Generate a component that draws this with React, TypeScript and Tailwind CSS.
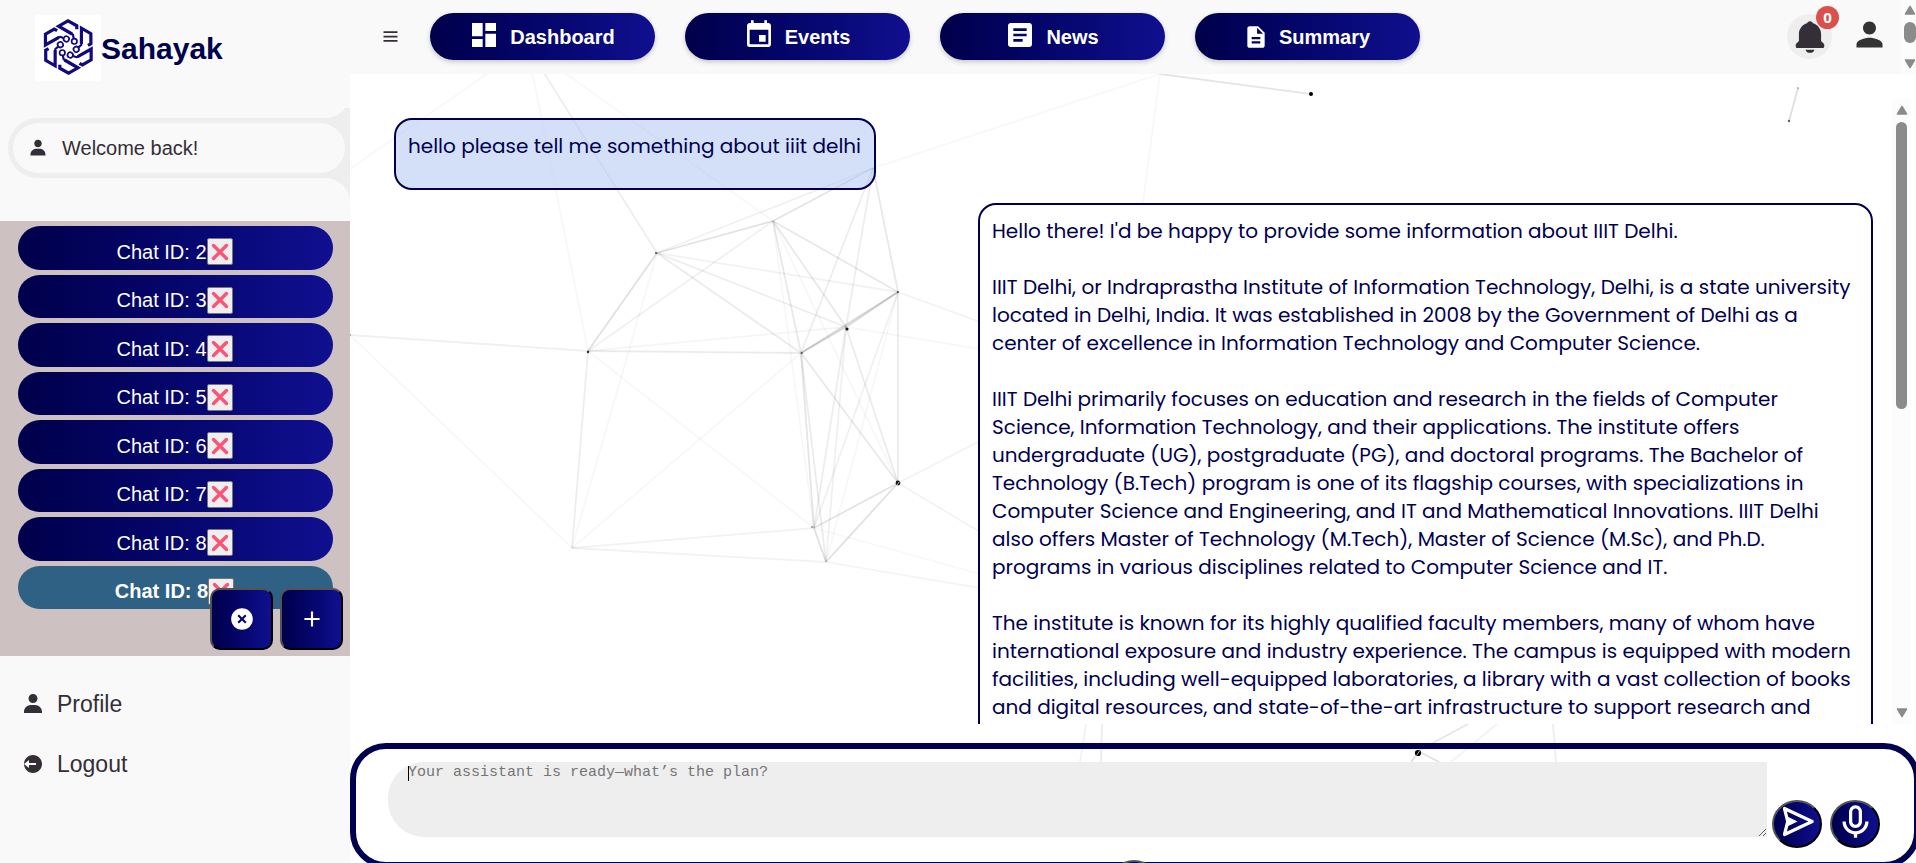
import type { ComponentType } from "react";
import {
  BiMenu,
  BiMicrophone,
  BiPlus,
  BiSend,
  BiSolidBell,
  BiSolidLogOutCircle,
  BiSolidUser,
  BiSolidXCircle,
} from "react-icons/bi";
import { MdArticle, MdDashboard, MdDescription, MdEvent, MdPerson } from "react-icons/md";

type Icon = ComponentType<{ className?: string }>;

const navItems: { label: string; icon: Icon; large: boolean }[] = [
  { label: "Dashboard", icon: MdDashboard, large: true },
  { label: "Events", icon: MdEvent, large: true },
  { label: "News", icon: MdArticle, large: true },
  { label: "Summary", icon: MdDescription, large: false },
];

const chats = [2, 3, 4, 5, 6, 7, 8, 8];

const reply = [
  "Hello there! I'd be happy to provide some information about IIIT Delhi.",
  "",
  "IIIT Delhi, or Indraprastha Institute of Information Technology, Delhi, is a state university",
  "located in Delhi, India. It was established in 2008 by the Government of Delhi as a",
  "center of excellence in Information Technology and Computer Science.",
  "",
  "IIIT Delhi primarily focuses on education and research in the fields of Computer",
  "Science, Information Technology, and their applications. The institute offers",
  "undergraduate (UG), postgraduate (PG), and doctoral programs. The Bachelor of",
  "Technology (B.Tech) program is one of its flagship courses, with specializations in",
  "Computer Science and Engineering, and IT and Mathematical Innovations. IIIT Delhi",
  "also offers Master of Technology (M.Tech), Master of Science (M.Sc), and Ph.D.",
  "programs in various disciplines related to Computer Science and IT.",
  "",
  "The institute is known for its highly qualified faculty members, many of whom have",
  "international exposure and industry experience. The campus is equipped with modern",
  "facilities, including well-equipped laboratories, a library with a vast collection of books",
  "and digital resources, and state-of-the-art infrastructure to support research and",
].join("\n");

// x1, y1, x2, y2, opacity
const links: number[][] = [
  [527, 46, 350, 169, 0.03],
  [527, 46, 588, 351, 0.03],
  [527, 46, 657, 253, 0.07],
  [527, 46, 773, 221, 0.03],
  [873, 168, 657, 253, 0.06],
  [873, 168, 773, 221, 0.11],
  [873, 168, 801, 353, 0.07],
  [873, 168, 846, 327, 0.07],
  [873, 168, 898, 292, 0.09],
  [873, 168, 1160, 74, 0.03],
  [1160, 74, 1311, 94, 0.1],
  [1160, 74, 1143, 202, 0.03],
  [773, 221, 657, 253, 0.11],
  [773, 221, 588, 351, 0.06],
  [773, 221, 801, 353, 0.09],
  [773, 221, 846, 327, 0.09],
  [773, 221, 898, 292, 0.09],
  [773, 221, 898, 483, 0.03],
  [773, 221, 814, 528, 0.03],
  [657, 253, 588, 351, 0.12],
  [657, 253, 801, 353, 0.08],
  [657, 253, 846, 327, 0.07],
  [657, 253, 898, 292, 0.05],
  [657, 253, 572, 548, 0.03],
  [588, 351, 801, 353, 0.08],
  [588, 351, 846, 327, 0.04],
  [588, 351, 350, 335, 0.06],
  [588, 351, 572, 548, 0.07],
  [588, 351, 814, 528, 0.03],
  [801, 353, 898, 292, 0.14],
  [801, 353, 846, 327, 0.14],
  [846, 327, 898, 292, 0.14],
  [801, 353, 898, 483, 0.09],
  [801, 353, 814, 528, 0.1],
  [801, 353, 826, 562, 0.08],
  [801, 353, 572, 548, 0.03],
  [846, 327, 898, 483, 0.08],
  [846, 327, 814, 528, 0.07],
  [846, 327, 826, 562, 0.06],
  [898, 292, 898, 483, 0.08],
  [898, 292, 814, 528, 0.06],
  [898, 292, 826, 562, 0.03],
  [898, 483, 814, 528, 0.11],
  [898, 483, 826, 562, 0.12],
  [814, 528, 826, 562, 0.12],
  [814, 528, 572, 548, 0.05],
  [826, 562, 572, 548, 0.05],
  [572, 548, 350, 335, 0.03],
  [898, 292, 980, 322, 0.05],
  [846, 327, 980, 349, 0.03],
  [898, 483, 980, 441, 0.05],
  [898, 483, 980, 532, 0.05],
  [814, 528, 980, 574, 0.03],
  [826, 562, 980, 588, 0.04],
  [1798, 88, 1789, 121, 0.13],
  [1086, 724, 1080, 762, 0.05],
  [1102, 724, 1101, 762, 0.08],
  [1468, 724, 1418, 751, 0.1],
  [1418, 753, 1411, 762, 0.12],
  [1418, 751, 1439, 762, 0.12],
  [1497, 724, 1451, 762, 0.05],
  [1553, 724, 1556, 762, 0.07],
];

// x, y, radius, opacity
const nodes: number[][] = [
  [1311, 94, 2, 1],
  [656, 253, 1, 0.7],
  [588, 352, 1.2, 0.8],
  [802, 353, 1, 0.5],
  [847, 329, 1.6, 0.9],
  [898, 292, 1, 0.6],
  [898, 483, 2.4, 0.9],
  [812, 527, 1, 0.4],
  [350, 335, 1, 0.3],
  [1789, 121, 1.2, 0.6],
  [1798, 88, 1, 0.3],
  [1418, 753, 3.1, 1],
];

function ParticleField() {
  return (
    <svg
      className="pointer-events-none absolute inset-0 h-full w-full"
      viewBox="350 0 1566 863"
      preserveAspectRatio="xMinYMin slice"
      aria-hidden="true"
    >
      {nodes.map(([x, y, r, o], i) => (
        <circle key={i} cx={x} cy={y} r={r} fill="#000" fillOpacity={o} />
      ))}
      {links.map(([x1, y1, x2, y2, o], i) => (
        <line key={i} x1={x1} y1={y1} x2={x2} y2={y2} stroke="#000" strokeOpacity={o} strokeWidth="1.8" />
      ))}
      <path d="M1416.500 755.500l3-4.500M897 485l2.500-3.500" stroke="#fff" strokeOpacity="0.7" strokeWidth="1" />
    </svg>
  );
}

function Logo() {
  return (
    <svg
      viewBox="0 0 66 66"
      className="h-[66px] w-[66px] bg-white"
      fill="none"
      stroke="#12087f"
      strokeWidth="3.2"
      aria-hidden="true"
    >
      {[0, 60, 120, 180, 240, 300].map((a) => (
        <g key={a} transform={`rotate(${a} 33.3 32)`}>
          <path d="M41.800 14.200V10.800L33 5.800 23.600 11.200 37 19" />
          <path d="M36 18.200l2 1.600.7 3.600" strokeWidth="2.2" />
          <circle cx="39.300" cy="26.300" r="2.700" strokeWidth="1.700" />
        </g>
      ))}
    </svg>
  );
}

function Arrow({ down = false }: { down?: boolean }) {
  return (
    <svg viewBox="0 0 12 10" className="h-[10px] w-[12px] shrink-0" aria-hidden="true">
      <path
        d={down ? "M1.5 1h9L6 8.5z" : "M1.5 9h9L6 1.5z"}
        fill="#8b8b8b"
        stroke="#8b8b8b"
        strokeWidth="1.5"
        strokeLinejoin="round"
      />
    </svg>
  );
}

function Sidebar() {
  return (
    <aside className="flex w-[350px] shrink-0 flex-col bg-[#f9f9f9] text-[#342e37]">
      <a href="#" className="flex h-[96px] items-center pl-[35px]">
        <Logo />
        <span className="text-[30px] font-bold text-[#00004f]">Sahayak</span>
      </a>

      <div className="mt-3 flex flex-col items-end">
        <div className="flex h-[10px] w-[25px] items-end overflow-hidden bg-[#eee]">
          <div className="h-[25px] w-[25px] shrink-0 rounded-br-[25px] bg-[#f9f9f9]" />
        </div>
        <div className="w-full pl-2">
          <div className="rounded-l-[30px] bg-[#eee] p-[5px]">
            <div className="flex h-[50px] items-center gap-[14px] rounded-[25px] bg-[#f9f9f9] pl-[15px] text-[20px]">
              <BiSolidUser className="h-5 w-5" />
              <span>Welcome back!</span>
            </div>
          </div>
        </div>
        <div className="w-[25px] bg-[#eee]">
          <div className="h-[25px] w-[25px] rounded-tr-[25px] bg-[#f9f9f9]" />
        </div>
      </div>

      <div className="relative mt-[18px] h-[435px] bg-[#cdc1c1] py-[5px] pr-[17px] pl-[18px]">
        <ul className="grid h-[383px] grid-rows-8 gap-[5px] text-[20px] text-white">
          {chats.map((id, i) => (
            <li
              key={i}
              className={
                i === chats.length - 1
                  ? "flex items-center justify-center rounded-full bg-[#2e6184] pt-2 pr-[2px] font-bold"
                  : "flex items-center justify-center rounded-full bg-linear-to-r from-[#00004b] to-[#101090] pt-2 pr-[2px]"
              }
            >
              <a href="#">Chat ID: {id}</a>
              <button
                type="button"
                aria-label={`Delete chat ${id}`}
                className="flex h-[27px] w-[26px] items-center justify-center rounded-xs border border-[#767676] bg-[#efefef]"
              >
                <svg viewBox="0 0 18 18" className="h-[18px] w-[18px]" aria-hidden="true">
                  <path d="M2.500 2.500l13 13M15.500 2.500l-13 13" stroke="#fb5479" strokeWidth="3.4" strokeLinecap="round" />
                </svg>
              </button>
            </li>
          ))}
        </ul>
        <div className="absolute right-[7px] bottom-[6px] flex gap-[7px]">
          <button
            type="button"
            aria-label="Clear chats"
            className="flex h-[62px] w-[63px] items-center justify-center rounded-[10px] border-2 border-black bg-linear-to-r from-[#00004b] to-[#101090] text-white [border-style:outset]"
          >
            <BiSolidXCircle className="h-[26px] w-[26px]" />
          </button>
          <button
            type="button"
            aria-label="New chat"
            className="flex h-[62px] w-[63px] items-center justify-center rounded-[10px] border-2 border-black bg-linear-to-r from-[#00004b] to-[#101090] text-white [border-style:outset]"
          >
            <BiPlus className="h-[26px] w-[26px]" />
          </button>
        </div>
      </div>

      <nav className="mt-6 flex flex-col pl-[21px] text-[23px]">
        <a href="#" className="flex h-[48px] items-center gap-3">
          <BiSolidUser className="h-6 w-6" />
          Profile
        </a>
        <a href="#" className="mt-3 flex h-[48px] items-center gap-3">
          <BiSolidLogOutCircle className="h-6 w-6" />
          Logout
        </a>
      </nav>
    </aside>
  );
}

function Header() {
  return (
    <header className="relative flex h-[74px] shrink-0 bg-[#f9f9f9]">
      <div className="flex flex-1 items-center pr-[12px] pb-px pl-[30px]">
        <button type="button" aria-label="Toggle menu" className="text-[#342e37]">
          <BiMenu className="h-[21px] w-[21px]" />
        </button>
        <nav className="ml-[29px] flex gap-[30px]">
          {navItems.map(({ label, icon: ItemIcon, large }) => (
            <a
              key={label}
              href="#"
              className="flex h-[47px] w-[225px] items-center justify-center gap-[10px] rounded-full bg-linear-to-r from-[#00004b] to-[#101090] pr-[2px] text-[20px] font-bold text-white shadow-[0_2px_5px_rgba(0,0,0,0.2)]"
            >
              <span className={large ? "pb-1" : ""}>
                <ItemIcon className={large ? "h-8 w-8" : "h-[26px] w-[26px]"} />
              </span>
              {label}
            </a>
          ))}
        </nav>
        <button
          type="button"
          aria-label="Notifications"
          className="relative ml-auto flex h-[45px] w-[45px] items-center justify-center rounded-full bg-[#eee] text-[#342e37]"
        >
          <BiSolidBell className="h-[38px] w-[38px]" />
          <span className="absolute -top-2 -right-[7px] flex h-[23px] w-[23px] items-center justify-center rounded-full bg-[#db504a] font-['Open_Sans',sans-serif] text-[15px] font-bold text-white">
            0
          </span>
        </button>
        <button type="button" aria-label="Account" className="ml-[18px] pb-1 text-[#333]">
          <MdPerson className="h-[39px] w-[39px]" />
        </button>
      </div>
      <div className="flex w-[15px] flex-col items-start overflow-hidden bg-[#fcfcfc] pt-[5px] pb-[5px] pl-[3px]">
        <Arrow />
        <div className="mt-[7px] h-[21px] w-[12px] shrink-0 rounded-full bg-[#8b8b8b]" />
        <div className="mt-auto">
          <Arrow down />
        </div>
      </div>
    </header>
  );
}

function Conversation() {
  return (
    <section className="relative mt-[25px] mr-[5px] flex h-[625px] shrink-0 overflow-hidden font-['Poppins','Inter',sans-serif] text-[20px] leading-[28px] text-[#00004f]">
      <div className="flex flex-1 flex-col pt-[19px] pr-[19px] pl-[44px]">
        <div className="self-start rounded-[18px] border-2 border-[#00004f] bg-[#aac2f2]/50 pt-3 pr-[13px] pb-[28px] pl-3">
          hello please tell me something about iiit delhi
        </div>
        <div className="mt-[13px] w-[895px] self-end rounded-[18px] border-2 border-[#00004f] bg-white py-3 pr-[13px] pl-3 whitespace-pre">
          {reply}
          {"\n\n"}
        </div>
      </div>
      <div className="flex w-[19px] flex-col items-center bg-[#fcfcfc] py-[6px]">
        <Arrow />
        <div className="mt-[7px] h-[287px] w-[11px] rounded-full bg-[#8b8b8b]" />
        <div className="mt-auto">
          <Arrow down />
        </div>
      </div>
    </section>
  );
}

function Composer() {
  return (
    <form className="relative mt-[19px] -mr-[4px] flex h-[125px] shrink-0 items-start rounded-[36px] border-[6px] border-[#00004f] pt-[13px] pr-[34px] pl-[32px]">
      <div className="relative flex flex-1">
        <textarea
          aria-label="Message"
          placeholder="Your assistant is ready—what’s the plan?"
          className="h-[75px] w-full rounded-l-[36px] bg-[#eee] pt-[2px] pl-5 font-['Consolas','Liberation_Mono',monospace] text-[15px] leading-[18px] placeholder:text-[#757575]"
        />
        <span className="absolute top-1 left-5 h-[15px] w-px bg-black" />
      </div>
      <div className="ml-[5px] flex gap-2 pt-[38px] text-white">
        <button
          type="button"
          aria-label="Send"
          className="flex h-[48px] w-[50px] items-start justify-center rounded-[50%] border-2 border-black bg-linear-to-r from-[#00004b] to-[#101090] [border-style:outset]"
        >
          <BiSend className="h-[39px] w-[39px]" />
        </button>
        <button
          type="button"
          aria-label="Record voice"
          className="flex h-[48px] w-[50px] items-start justify-center rounded-[50%] border-2 border-black bg-linear-to-r from-[#00004b] to-[#101090] [border-style:outset]"
        >
          <BiMicrophone className="h-[39px] w-[39px]" />
        </button>
      </div>
    </form>
  );
}

export default function App() {
  return (
    <div className="flex h-screen overflow-hidden bg-white font-['Liberation_Sans',Arial,sans-serif]">
      <Sidebar />
      <main className="relative flex min-w-0 flex-1 flex-col overflow-hidden">
        <ParticleField />
        <Header />
        <Conversation />
        <Composer />
        <span className="absolute top-[860px] left-1/2 -ml-[24px] h-[48px] w-[50px] rounded-[50%] border-2 border-black bg-[#00004b] [border-style:outset]" />
      </main>
    </div>
  );
}
